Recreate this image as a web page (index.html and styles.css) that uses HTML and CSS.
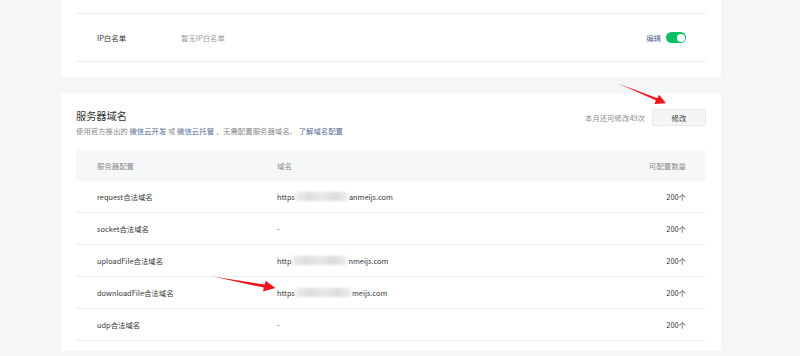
FILE: index.html
```html
<!doctype html>
<html>
<head>
<meta charset="utf-8">
<title>服务器域名</title>
<link rel="stylesheet" href="styles.css">
</head>
<body>
<div class="page">

    <section class="card card-top">
        <div class="kv-row">
            <span class="kv-label">IP白名单</span>
            <span class="kv-value">暂无IP白名单</span>
            <span class="kv-action">
                <a class="link">编辑</a>
                <span class="switch"><span class="knob"></span></span>
            </span>
        </div>
    </section>

    <section class="card">
        <div class="card-head">
            <div>
                <h2 class="card-title">服务器域名</h2>
                <p class="desc">使用官方推出的 <a class="link">微信云开发</a> 或 <a class="link">微信云托管</a> ，无需配置服务器域名。 <a class="link">了解域名配置</a></p>
            </div>
            <div class="head-ops">
                <span class="quota">本月还可修改49次</span>
                <button class="btn">修改</button>
            </div>
        </div>

        <div class="table">
            <div class="tr th">
                <span class="td c1">服务器配置</span>
                <span class="td c2">域名</span>
                <span class="td c3">可配置数量</span>
            </div>
            <div class="tr">
                <span class="td c1">request合法域名</span>
                <span class="td c2">https<span class="mask m1"></span>anmeijs.com</span>
                <span class="td c3">200个</span>
            </div>
            <div class="tr">
                <span class="td c1">socket合法域名</span>
                <span class="td c2">-</span>
                <span class="td c3">200个</span>
            </div>
            <div class="tr">
                <span class="td c1">uploadFile合法域名</span>
                <span class="td c2">http<span class="mask m2"></span>nmeijs.com</span>
                <span class="td c3">200个</span>
            </div>
            <div class="tr">
                <span class="td c1">downloadFile合法域名</span>
                <span class="td c2">https<span class="mask m3"></span>meijs.com</span>
                <span class="td c3">200个</span>
            </div>
            <div class="tr">
                <span class="td c1">udp合法域名</span>
                <span class="td c2">-</span>
                <span class="td c3">200个</span>
            </div>
            <div class="tr">
                <span class="td c1">tcp合法域名</span>
                <span class="td c2">-</span>
                <span class="td c3">200个</span>
            </div>
        </div>
    </section>

    <!-- annotation arrows -->
    <svg class="marks" width="800" height="356" viewBox="0 0 800 356">
        <polygon fill="#f2141c" points="618,88.5 655.8,105.2 654.6,109 666,108.2 659,99.8 657.4,103.2"/>
        <polygon fill="#f2141c" points="213,281.5 263.8,292.6 263,296.4 275.5,293 265.6,285.8 264.6,289.6"/>
    </svg>
</div>
</body>
</html>
```

FILE: styles.css
```css
*{
    margin:0;
    padding:0;
    box-sizing:border-box;
}
body{
    background:#f5f6f7;
    font-family:"Noto Sans CJK SC", "Liberation Sans", sans-serif;
    font-size:7.4px;
    color:#353535;
    overflow:hidden;
}

.page{
    position:relative;
    padding-left:61px;
    height:356px;
}

.card{
    width:660px;
    background:#fff;
    border-radius:3px;
    padding:16px 15px 0 15px;
    margin-top:16px;
}
.card-top{
    margin-top:-5px;
    padding-top:18px;
    padding-bottom:15px;
}

.link{
    color:#576b95;
    text-decoration:none;
}

.kv-row{
    display:flex;
    align-items:center;
    height:49px;
    border-top:1px solid #ececec;
    border-bottom:1px solid #ececec;
    padding:0 20px 0 21px;
}
.kv-label{
    width:84px;
}
.kv-value{
    flex:1;
    color:#9a9a9a;
}
.kv-action{
    display:flex;
    align-items:center;
    gap:5px;
}
.switch{
    width:20px;
    height:11px;
    border-radius:6px;
    background:#07c160;
    display:flex;
    justify-content:flex-end;
    align-items:center;
    padding:0 1.5px;
}
.knob{
    width:8px;
    height:8px;
    border-radius:50%;
    background:#fff;
}

.card-head{
    display:flex;
    justify-content:space-between;
    align-items:flex-start;
}
.card-title{
    font-size:10.2px;
    font-weight:normal;
    line-height:14px;
    color:#353535;
}
.desc{
    margin-top:2px;
    line-height:12px;
    color:#8a8a8a;
}
.head-ops{
    display:flex;
    align-items:center;
    gap:7px;
}
.quota{
    color:#8a8a8a;
}
.btn{
    width:54px;
    height:17px;
    font:inherit;
    color:#353535;
    background:#f4f5f6;
    border:1px solid #e8e9ea;
    border-radius:2px;
}

.table{
    margin-top:13px;
}
.tr{
    display:flex;
    align-items:center;
    height:32px;
    border-bottom:1px solid #eeeeee;
}
.th{
    height:31px;
    background:#f6f7f8;
    border-bottom:none;
    color:#8a8a8a;
}
.td{
    display:flex;
    align-items:center;
}
.c1{
    width:201px;
    padding-left:21px;
}
.c2{
    flex:1;
}
.c3{
    width:120px;
    justify-content:flex-end;
    padding-right:20px;
}
.mask{
    display:inline-block;
    height:9px;
    margin:0 1px;
    background:linear-gradient(90deg, #ececec, #dcdcdc 25%, #e8e8e8 50%, #dadada 75%, #eeeeee);
    filter:blur(1.8px);
}
.m1{ width:52px; }
.m2{ width:55px; }
.m3{ width:55px; }

.marks{
    position:absolute;
    top:0;
    left:0;
    pointer-events:none;
}
```
